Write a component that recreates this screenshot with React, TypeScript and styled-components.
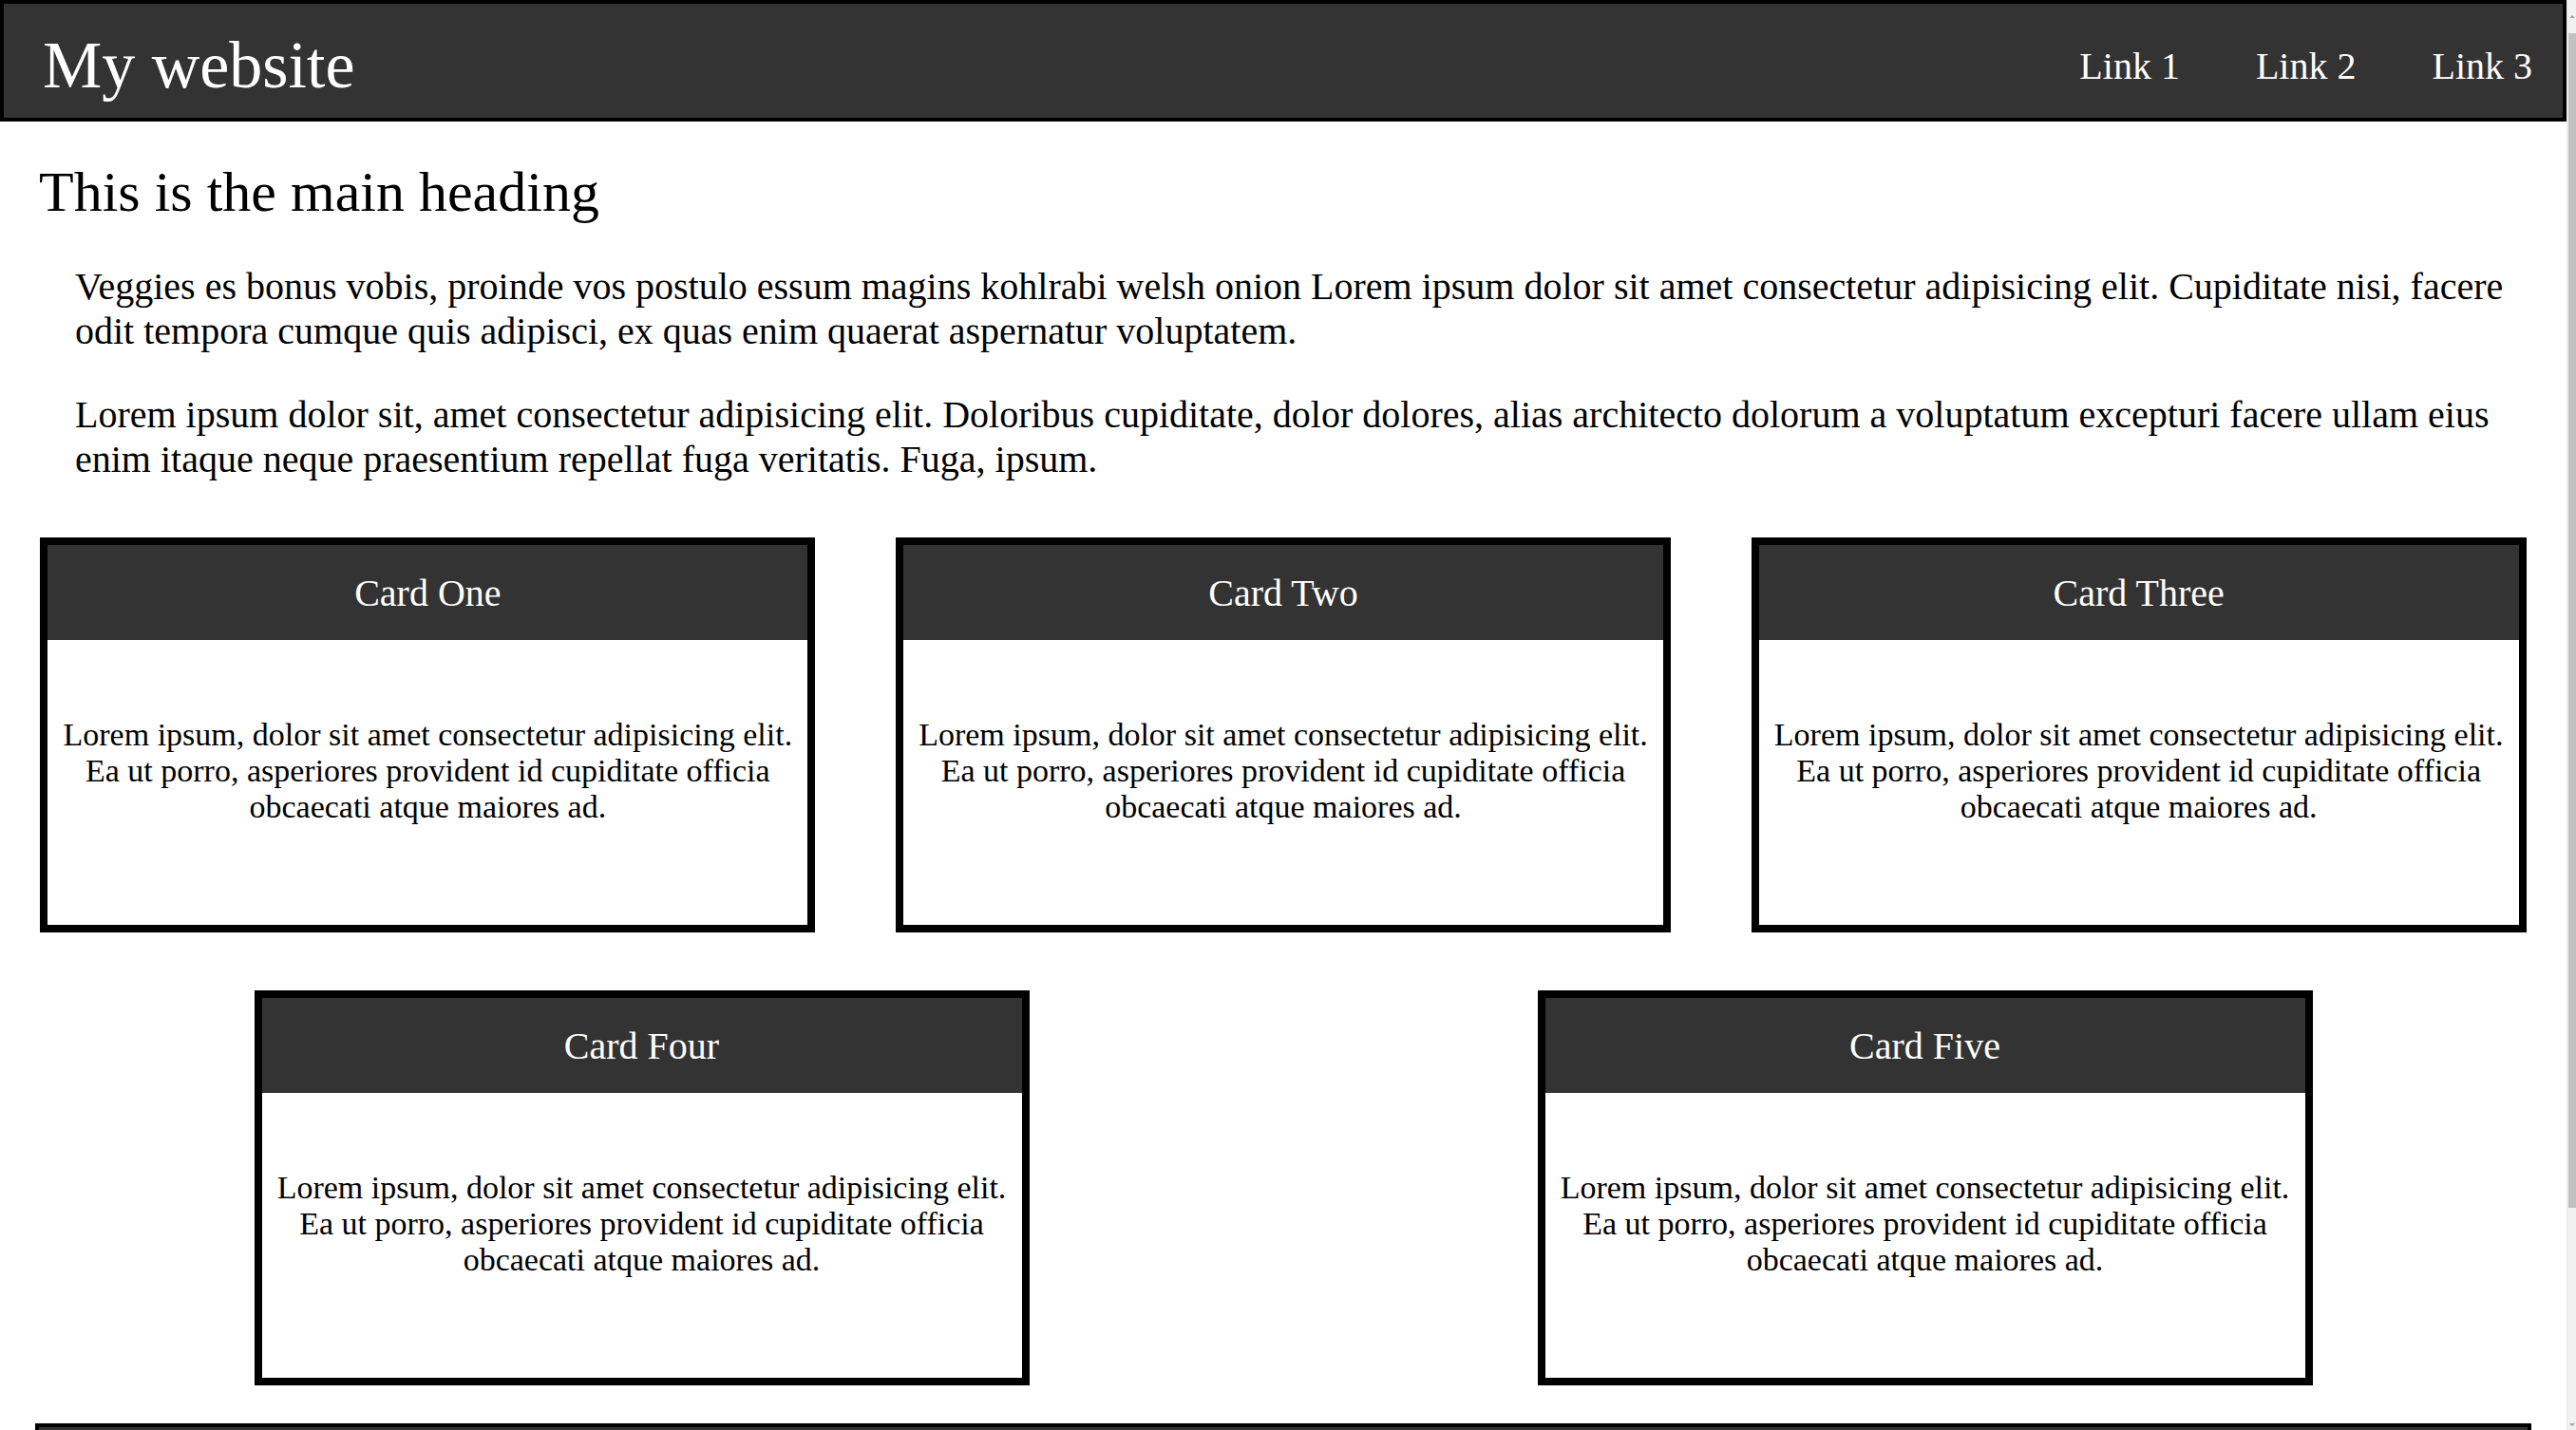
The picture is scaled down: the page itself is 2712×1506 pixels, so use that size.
import React from 'react';
import styled, {createGlobalStyle} from 'styled-components';

const GlobalStyle = createGlobalStyle`
  html,
  body {
    margin: 0;
    padding: 0;
    overflow: hidden;
  }
  body {
    font-family: 'Liberation Serif', 'Times New Roman', serif;
    color: #000;
    background: #fff;
  }
`;

export default function App() {
  const links = ['Link 1', 'Link 2', 'Link 3'];
  const cards = ['Card One', 'Card Two', 'Card Three', 'Card Four', 'Card Five'];
  const cardText =
    'Lorem ipsum, dolor sit amet consectetur adipisicing elit. Ea ut porro, asperiores provident id cupiditate officia obcaecati atque maiores ad.';

  return (
    <Shell>
      <GlobalStyle />
      <Page>
        <Header>
          <Logo>My website</Logo>
          <Nav>
            {links.map((link) => (
              <NavLink key={link} href="#">
                {link}
              </NavLink>
            ))}
          </Nav>
        </Header>
        <Main>
          <Heading>This is the main heading</Heading>
          <Text>
            Veggies es bonus vobis, proinde vos postulo essum magins kohlrabi welsh onion Lorem ipsum dolor sit amet
            consectetur adipisicing elit. Cupiditate nisi, facere odit tempora cumque quis adipisci, ex quas enim quaerat
            aspernatur voluptatem.
          </Text>
          <Text>
            Lorem ipsum dolor sit, amet consectetur adipisicing elit. Doloribus cupiditate, dolor dolores, alias
            architecto dolorum a voluptatum excepturi facere ullam eius enim itaque neque praesentium repellat fuga
            veritatis. Fuga, ipsum.
          </Text>
        </Main>
        <CardGrid>
          {cards.map((title) => (
            <Card key={title}>
              <CardHeader>{title}</CardHeader>
              <CardBody>{cardText}</CardBody>
            </Card>
          ))}
        </CardGrid>
        <Footer />
      </Page>
      <ScrollTrack>
        <ScrollArrow $up />
        <ScrollThumb />
        <ScrollArrow />
      </ScrollTrack>
    </Shell>
  );
}

const Shell = styled.div`
  display: flex;
  width: 2712px;
  height: 1506px;
  overflow: hidden;
`;

const Page = styled.div`
  flex: 1 1 auto;
  min-width: 0;
  overflow: hidden;
`;

const Header = styled.header`
  display: flex;
  align-items: center;
  justify-content: space-between;
  box-sizing: border-box;
  height: 128px;
  padding: 10px 32px 0 41px;
  border: 4px solid #000;
  background: #333;
  color: #fff;
`;

const Logo = styled.div`
  font-size: 70px;
  padding-bottom: 1px;
`;

const Nav = styled.nav`
  display: flex;
  gap: 80px;
`;

const NavLink = styled.a`
  color: #fff;
  text-decoration: none;
  font-size: 40px;
`;

const Main = styled.main`
  padding: 0 41px;
`;

const Heading = styled.h1`
  margin: 40px 0 41px;
  font-size: 60px;
  font-weight: normal;
`;

const Text = styled.p`
  margin: 41px 0 40px 38px;
  font-size: 40px;
`;

const CardGrid = styled.section`
  display: flex;
  flex-wrap: wrap;
  justify-content: space-around;
  row-gap: 61px;
  padding-top: 19px;
`;

const Card = styled.article`
  display: flex;
  flex-direction: column;
  box-sizing: border-box;
  width: 816px;
  border: 8px solid #000;
`;

const CardHeader = styled.h2`
  display: flex;
  align-items: center;
  justify-content: center;
  height: 100px;
  margin: 0;
  background: #333;
  color: #fff;
  font-size: 40px;
  font-weight: normal;
`;

const CardBody = styled.p`
  box-sizing: border-box;
  height: 300px;
  margin: 0;
  padding: 81px 3px 0;
  font-size: 34px;
  text-align: center;
`;

const Footer = styled.footer`
  height: 120px;
  margin: 40px 37px 0;
  border: 4px solid #000;
  background: #333;
`;

const ScrollTrack = styled.div`
  display: flex;
  flex-direction: column;
  align-items: center;
  flex-shrink: 0;
  width: 10px;
  background: #f1f1f1;
  border-left: 1px solid #e6e6e6;
  box-sizing: border-box;
`;

const ScrollArrow = styled.div<{$up?: boolean}>`
  width: 0;
  height: 0;
  margin: ${(p) => (p.$up ? '16px 0 16px' : 'auto 0 4px')};
  border-left: 3px solid transparent;
  border-right: 3px solid transparent;
  ${(p) => (p.$up ? 'border-bottom: 3px solid #a3a3a3;' : 'border-top: 3px solid #a3a3a3;')}
`;

const ScrollThumb = styled.div`
  width: 8px;
  height: 1237px;
  background: #c1c1c1;
`;
